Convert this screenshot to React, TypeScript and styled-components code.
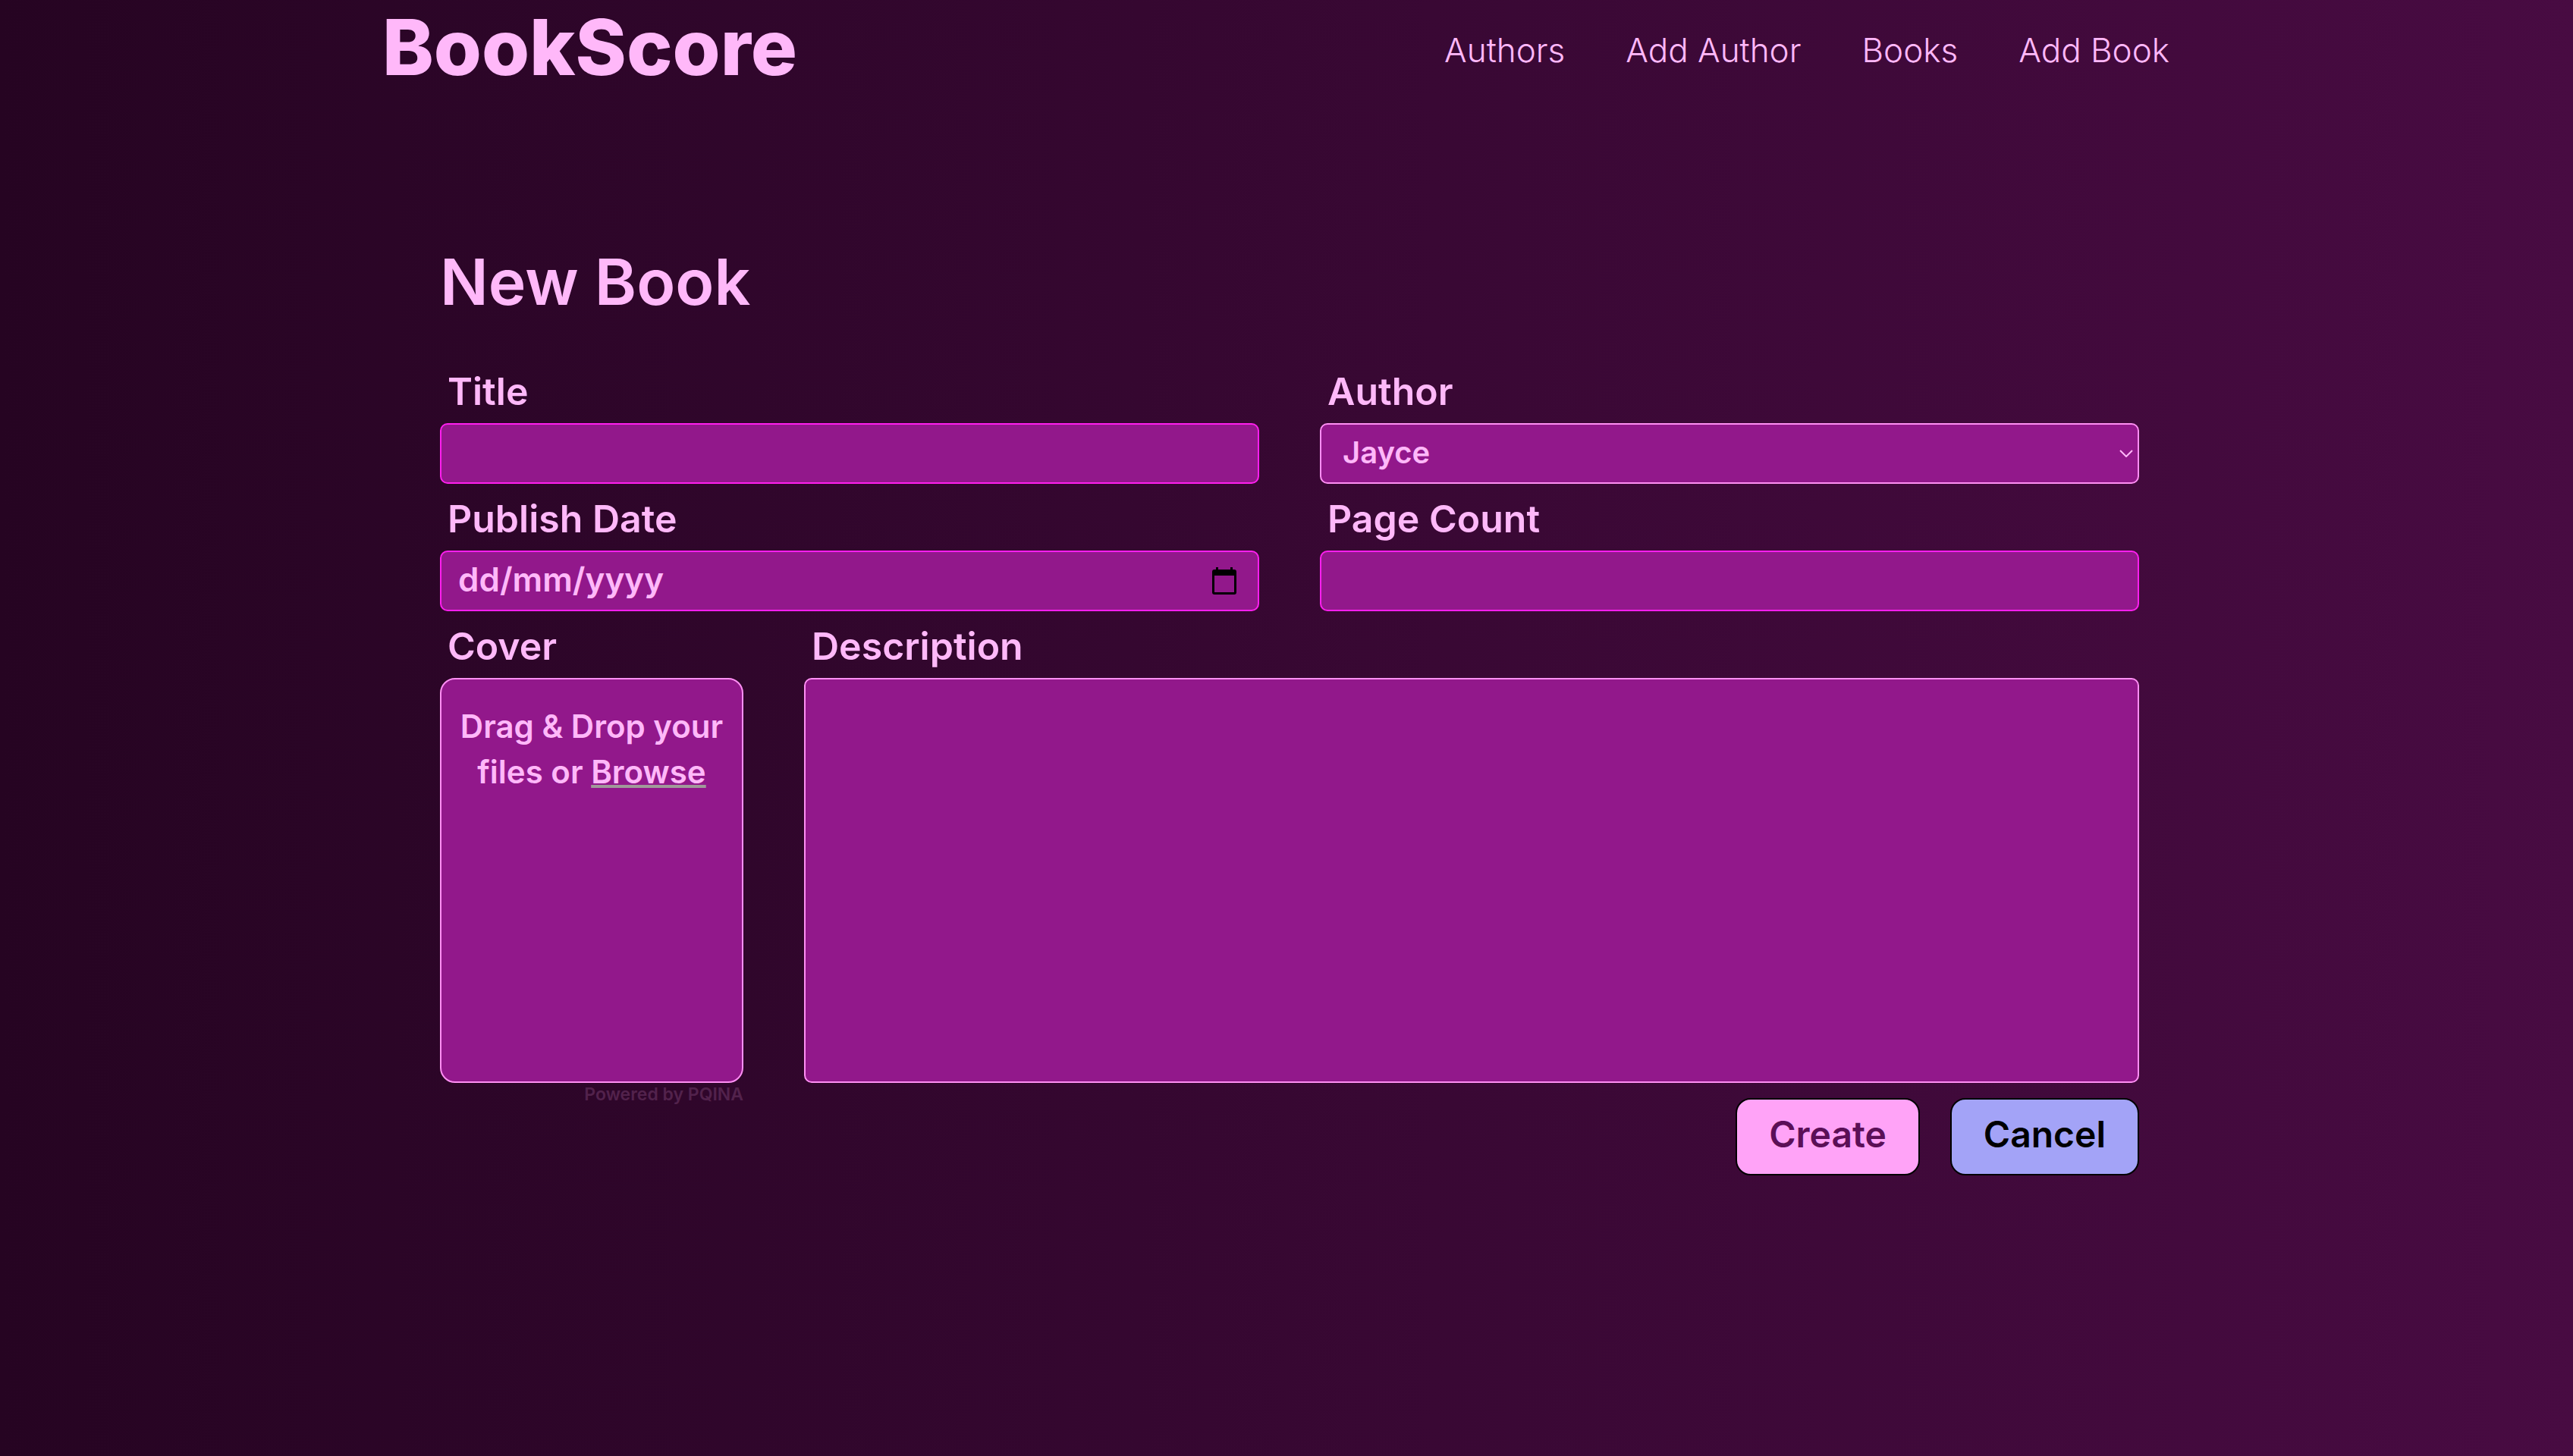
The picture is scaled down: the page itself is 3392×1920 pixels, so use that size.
import React from "react";
import styled, { createGlobalStyle } from "styled-components";

const color = {
  text: "#ffb8f9",
  field: "#92188b",
  border: "#ff1fef",
  borderSoft: "#ff8ff4",
};

const GlobalStyle = createGlobalStyle`
  *, *::before, *::after { box-sizing: border-box; }
  body {
    margin: 0;
    font-family: Inter, "Open Sans", sans-serif;
    color: ${color.text};
    background: #260422;
  }
  input, select, textarea, button { font: inherit; color: inherit; margin: 0; }
`;

const Page = styled.div`
  min-height: 100vh;
  padding-left: 8px;
  background: linear-gradient(to right, #260422, #480b42);
`;

const Header = styled.header`
  display: flex;
  justify-content: space-between;
  align-items: center;
  max-width: 2400px;
  margin: 0 auto;
`;

const Logo = styled.a`
  padding-left: 4px;
  color: inherit;
  text-decoration: none;
  font-size: 102px;
  font-weight: 800;
  line-height: 124px;
`;

const Nav = styled.nav`
  display: flex;
  padding-top: 8px;
`;

const NavLink = styled.a`
  padding: 0 40px;
  color: inherit;
  text-decoration: none;
  font-size: 44px;
  font-weight: 300;
  line-height: 48px;
`;

const Main = styled.main`
  max-width: 2240px;
  margin: 0 auto;
  padding: 198px 0 80px;
`;

const Heading = styled.h1`
  margin: 0 0 48px;
  font-size: 84px;
  font-weight: 600;
  line-height: 100px;
`;

const Row = styled.div<{ $columns: string }>`
  display: grid;
  grid-template-columns: ${(p) => p.$columns};
  column-gap: 80px;
`;

const Field = styled.div`
  display: flex;
  flex-direction: column;
  min-width: 0;
`;

const Label = styled.label`
  padding: 16px 10px 12px;
  font-size: 50px;
  font-weight: 600;
  line-height: 60px;
`;

const Control = styled.div<{ $soft?: boolean }>`
  display: flex;
  align-items: center;
  height: 80px;
  border: 2px solid ${(p) => (p.$soft ? color.borderSoft : color.border)};
  border-radius: 10px;
  background: ${color.field};
`;

const Input = styled.input`
  flex: 1;
  min-width: 0;
  height: 100%;
  padding: 0 22px 4px;
  border: 0;
  outline: 0;
  background: transparent;
  font-size: 44px;
  font-weight: 600;
  &::placeholder { color: inherit; opacity: 1; }
`;

const CalendarButton = styled.button`
  display: flex;
  padding: 0 28px 0 0;
  border: 0;
  background: transparent;
  color: #000;
`;

const SelectIcon = styled.svg`
  flex: none;
  margin-right: 6px;
`;

const Select = styled.select`
  flex: 1;
  height: 100%;
  padding: 0 28px 4px;
  border: 0;
  outline: 0;
  appearance: none;
  background: transparent;
  font-size: 40px;
  font-weight: 600;
`;

const DropZone = styled.div`
  height: 534px;
  padding: 32px 8px;
  border: 2px solid ${color.borderSoft};
  border-radius: 20px;
  background: ${color.field};
  text-align: center;
  font-size: 42px;
  font-weight: 600;
  line-height: 60px;
`;

const Browse = styled.button`
  padding: 0;
  border: 0;
  background: transparent;
  text-decoration: underline;
  text-decoration-color: #a09a9a;
  text-decoration-thickness: 4px;
  text-decoration-skip-ink: none;
`;

const TextArea = styled.textarea`
  display: block;
  height: 534px;
  padding: 12px 22px;
  border: 2px solid ${color.borderSoft};
  border-radius: 10px;
  outline: 0;
  resize: none;
  background: ${color.field};
  font-size: 44px;
  font-weight: 600;
`;

const Credit = styled.a`
  justify-self: end;
  align-self: start;
  color: #52224c;
  text-decoration: none;
  font-size: 23px;
  font-weight: 600;
  line-height: 30px;
`;

const Actions = styled.div`
  display: flex;
  justify-content: flex-end;
  gap: 40px;
  padding-top: 20px;
`;

const Action = styled.button<{ $primary?: boolean }>`
  height: 102px;
  padding: 0 42px 8px;
  border: 2px solid #000;
  border-radius: 20px;
  background: ${(p) => (p.$primary ? "#ffa3f7" : "#a3a3f7")};
  color: ${(p) => (p.$primary ? "#5b0f57" : "#000")};
  font-size: 48px;
  font-weight: 600;
`;

const links = ["Authors", "Add Author", "Books", "Add Book"];

export default function App() {
  return (
    <Page>
      <GlobalStyle />
      <Header>
        <Logo href="#">BookScore</Logo>
        <Nav>
          {links.map((name) => (
            <NavLink key={name} href="#">{name}</NavLink>
          ))}
        </Nav>
      </Header>
      <Main>
        <Heading>New Book</Heading>
        <form onSubmit={(e) => e.preventDefault()}>
          <Row $columns="1fr 1fr">
            <Field>
              <Label htmlFor="title">Title</Label>
              <Control><Input id="title" type="text" /></Control>
            </Field>
            <Field>
              <Label htmlFor="author">Author</Label>
              <Control $soft>
                <Select id="author" defaultValue="Jayce">
                  <option>Jayce</option>
                </Select>
                <SelectIcon width="18" height="10" viewBox="0 0 18 10" fill="none" stroke="currentColor" strokeWidth="2">
                  <path d="M1 1l8 8 8-8" />
                </SelectIcon>
              </Control>
            </Field>
          </Row>
          <Row $columns="1fr 1fr">
            <Field>
              <Label htmlFor="published">Publish Date</Label>
              <Control>
                <Input id="published" type="text" placeholder="dd/mm/yyyy" />
                <CalendarButton type="button" aria-label="Open calendar">
                  <svg width="32" height="36" viewBox="0 0 32 36" fill="currentColor">
                    <path fillRule="evenodd" d="M5 0h3v3h16V0h3v3h2a3 3 0 0 1 3 3v27a3 3 0 0 1-3 3H3a3 3 0 0 1-3-3V6a3 3 0 0 1 3-3h2zM3 11v22h26V11z" />
                  </svg>
                </CalendarButton>
              </Control>
            </Field>
            <Field>
              <Label htmlFor="pages">Page Count</Label>
              <Control><Input id="pages" type="text" inputMode="numeric" /></Control>
            </Field>
          </Row>
          <Row $columns="5fr 22fr">
            <Field>
              <Label as="span">Cover</Label>
              <DropZone>
                <span>Drag &amp; Drop your</span> <span>files or</span>{" "}
                <Browse type="button">Browse</Browse>
              </DropZone>
            </Field>
            <Field>
              <Label htmlFor="description">Description</Label>
              <TextArea id="description" />
            </Field>
          </Row>
          <Row $columns="5fr 22fr">
            <Credit href="#">Powered by PQINA</Credit>
            <Actions>
              <Action type="submit" $primary>Create</Action>
              <Action type="button">Cancel</Action>
            </Actions>
          </Row>
        </form>
      </Main>
    </Page>
  );
}
